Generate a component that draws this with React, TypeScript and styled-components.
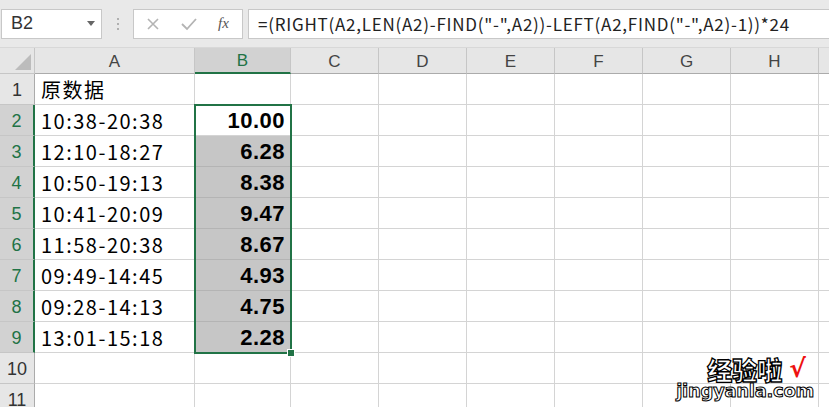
import * as React from 'react';
import styled, { createGlobalStyle } from 'styled-components';

const GlobalStyle = createGlobalStyle`
  html, body {
    margin: 0;
    padding: 0;
    background: #ffffff;
  }
  body {
    font-family: "Liberation Sans", "Noto Sans CJK SC", sans-serif;
  }
`;

const GREEN = '#217346';
const GRID = '#d4d4d4';

const Window = styled.div`
  width: 829px;
  height: 407px;
  overflow: hidden;
  display: flex;
  flex-direction: column;
  background: #ffffff;
`;

const FormulaBar = styled.div`
  height: 48px;
  flex: none;
  background: #e9e9e9;
  border-bottom: 1px solid #d8d8d8;
  display: flex;
  align-items: center;
  padding-left: 1px;
  box-sizing: border-box;
`;

const NameBox = styled.div`
  width: 101px;
  height: 30px;
  box-sizing: border-box;
  background: #ffffff;
  border: 1px solid #c8c8c8;
  display: flex;
  align-items: center;
  justify-content: space-between;
  padding: 0 6px 0 9px;
  font-size: 18px;
  color: #333333;
`;

const Dots = styled.div`
  width: 31px;
  display: flex;
  flex-direction: column;
  align-items: center;
  gap: 3px;
  span {
    width: 2px;
    height: 2px;
    background: #b0b0b0;
  }
`;

const ButtonBox = styled.div`
  width: 110px;
  height: 30px;
  box-sizing: border-box;
  background: #ffffff;
  border: 1px solid #c8c8c8;
  display: flex;
  align-items: center;
  padding-left: 12px;
  gap: 14px;
`;

const FxLabel = styled.span`
  font-family: "Liberation Serif", serif;
  font-style: italic;
  font-size: 15px;
  color: #555555;
  margin-left: 6px;
`;

const FormulaInput = styled.div`
  flex: 1;
  height: 30px;
  margin-left: 5px;
  box-sizing: border-box;
  background: #ffffff;
  border: 1px solid #c8c8c8;
  border-right: none;
  display: flex;
  align-items: center;
  padding-left: 9px;
  font-family: "Noto Sans CJK SC", sans-serif;
  font-size: 17px;
  letter-spacing: 0.75px;
  color: #222222;
  white-space: nowrap;
`;

const Sheet = styled.div`
  position: relative;
  flex: 1;
  display: grid;
  grid-template-columns: 35px 160px 96px repeat(6, 88px) 1fr;
  grid-auto-rows: 31px;
  grid-template-rows: 26px;
`;

const Corner = styled.div`
  background: #e6e6e6;
  border-right: 1px solid #c6c6c6;
  border-bottom: 1px solid #c6c6c6;
  box-sizing: border-box;
  display: flex;
  align-items: flex-end;
  justify-content: flex-end;
  padding: 0 3px 3px 0;
`;

const ColHeader = styled.div<{ active?: boolean }>`
  box-sizing: border-box;
  background: ${(p) => (p.active ? '#d2d2d2' : '#e6e6e6')};
  color: ${(p) => (p.active ? GREEN : '#444444')};
  border-right: 1px solid #c6c6c6;
  border-bottom: ${(p) => (p.active ? `2px solid ${GREEN}` : '1px solid #ababab')};
  display: flex;
  align-items: center;
  justify-content: center;
  font-size: 17px;
  padding-top: 2px;
`;

const RowHeader = styled.div<{ active?: boolean }>`
  box-sizing: border-box;
  background: ${(p) => (p.active ? '#d2d2d2' : '#e6e6e6')};
  color: ${(p) => (p.active ? GREEN : '#333333')};
  border-bottom: 1px solid #c6c6c6;
  border-right: ${(p) => (p.active ? `2px solid ${GREEN}` : '1px solid #ababab')};
  display: flex;
  align-items: flex-end;
  justify-content: center;
  padding-bottom: 3px;
  font-size: 18px;
`;

const Cell = styled.div<{ selected?: boolean; num?: boolean }>`
  box-sizing: border-box;
  background: ${(p) => (p.selected ? '#c6c6c6' : '#ffffff')};
  border-right: 1px solid ${GRID};
  border-bottom: 1px solid ${(p) => (p.selected ? '#b4b4b4' : GRID)};
  display: flex;
  align-items: flex-end;
  justify-content: ${(p) => (p.num ? 'flex-end' : 'flex-start')};
  padding: 0 5px ${(p) => (p.num ? '1px' : '2px')} 6px;
  font-family: ${(p) => (p.num ? '"Liberation Sans"' : '"Noto Sans CJK SC"')}, sans-serif;
  font-size: ${(p) => (p.num ? '22px' : '20px')};
  letter-spacing: ${(p) => (p.num ? '0.5px' : '1.5px')};
  font-weight: ${(p) => (p.num ? 700 : 400)};
  color: #000000;
  white-space: nowrap;
  line-height: 1.2;
`;

const Selection = styled.div`
  position: absolute;
  left: 194px;
  top: 56px;
  width: 98px;
  height: 250px;
  box-sizing: border-box;
  border: 2px solid ${GREEN};
  pointer-events: none;
`;

const FillHandle = styled.div`
  position: absolute;
  right: -5px;
  bottom: -5px;
  width: 6px;
  height: 6px;
  background: ${GREEN};
  border: 1px solid #ffffff;
`;

const Watermark = styled.div`
  position: absolute;
  right: 15px;
  top: 309px;
  display: flex;
  flex-direction: column;
  align-items: flex-end;
  gap: 1px;
  pointer-events: none;
`;

const MarkTitle = styled.div`
  display: flex;
  align-items: center;
  gap: 7px;
  height: 24px;
  font-family: "Noto Sans CJK SC", sans-serif;
  font-weight: 900;
  font-size: 25px;
  line-height: 24px;
  color: #ffffff;
  -webkit-text-stroke: 1.3px #000000;
  margin-right: 8px;
`;

const Check = styled.span`
  color: #ee1111;
  -webkit-text-stroke: 0;
  font-family: "DejaVu Sans", sans-serif;
  font-weight: 700;
  font-size: 25px;
  line-height: 24px;
`;

const MarkUrl = styled.div`
  font-family: "DejaVu Sans", sans-serif;
  font-weight: 900;
  font-size: 18px;
  line-height: 18px;
  letter-spacing: -0.3px;
  color: #ffffff;
  -webkit-text-stroke: 1px #000000;
`;

const data: [string, string][] = [
  ['10:38-20:38', '10.00'],
  ['12:10-18:27', '6.28'],
  ['10:50-19:13', '8.38'],
  ['10:41-20:09', '9.47'],
  ['11:58-20:38', '8.67'],
  ['09:49-14:45', '4.93'],
  ['09:28-14:13', '4.75'],
  ['13:01-15:18', '2.28'],
];

const columns = ['A', 'B', 'C', 'D', 'E', 'F', 'G', 'H', ''];

function GridRow({ index, a, b }: { index: number; a: string; b: string }): JSX.Element {
  const inSel = index >= 2 && index <= 9;
  return (
    <>
      <RowHeader active={inSel}>{index}</RowHeader>
      <Cell>{a}</Cell>
      <Cell num selected={index >= 3 && index <= 9}>{b}</Cell>
      {columns.slice(2).map((c) => (
        <Cell key={c || 'rest'} />
      ))}
    </>
  );
}

export default function App(): JSX.Element {
  const rows = [
    { a: '原数据', b: '' },
    ...data.map(([a, b]) => ({ a, b })),
    { a: '', b: '' },
    { a: '', b: '' },
  ];
  return (
    <Window>
      <GlobalStyle />
      <FormulaBar>
        <NameBox>
          <span>B2</span>
          <svg width="8" height="5" viewBox="0 0 8 5">
            <polygon points="0,0 8,0 4,5" fill="#666" />
          </svg>
        </NameBox>
        <Dots>
          <span />
          <span />
          <span />
        </Dots>
        <ButtonBox>
          <svg width="14" height="14" viewBox="0 0 14 14">
            <path d="M2 2 L12 12 M12 2 L2 12" stroke="#b4b4b4" strokeWidth="1.6" fill="none" />
          </svg>
          <svg width="18" height="14" viewBox="0 0 18 14" style={{ marginLeft: 6 }}>
            <path d="M2 7 L7 12 L16 2" stroke="#b4b4b4" strokeWidth="1.8" fill="none" />
          </svg>
          <FxLabel>fx</FxLabel>
        </ButtonBox>
        <FormulaInput>=(RIGHT(A2,LEN(A2)-FIND("-",A2))-LEFT(A2,FIND("-",A2)-1))*24</FormulaInput>
      </FormulaBar>
      <Sheet>
        <Corner>
          <svg width="16" height="16" viewBox="0 0 16 16">
            <polygon points="16,0 16,16 0,16" fill="#bcbcbc" />
          </svg>
        </Corner>
        {columns.map((c) => (
          <ColHeader key={c || 'rest'} active={c === 'B'}>{c}</ColHeader>
        ))}
        {rows.map((r, i) => (
          <GridRow key={i} index={i + 1} a={r.a} b={r.b} />
        ))}
        <Selection>
          <FillHandle />
        </Selection>
        <Watermark>
          <MarkTitle>
            <span>经验啦</span>
            <Check>√</Check>
          </MarkTitle>
          <MarkUrl>jingyanla.com</MarkUrl>
        </Watermark>
      </Sheet>
    </Window>
  );
}
